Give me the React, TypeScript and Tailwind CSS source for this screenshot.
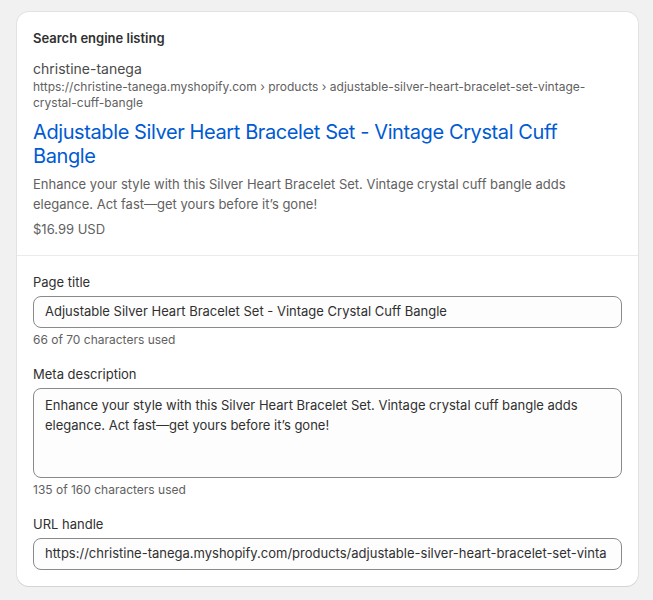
import React from "react";

export default function App() {
  const desc =
    "Enhance your style with this Silver Heart Bracelet Set. Vintage crystal cuff bangle adds elegance. Act fast\u2014get yours before it\u2019s gone!";
  return (
    <div
      className="min-h-[600px] w-full bg-[#f1f1f1] pt-[12px] px-[17px]"
      style={{ fontFamily: "Inter, 'Noto Sans', sans-serif" }}
    >
      <div className="w-[621px] rounded-[12px] bg-white shadow-[0_1px_0_0_rgba(26,26,26,0.07),0_0_0_1px_rgba(0,0,0,0.06)]">
        <div className="px-[16px] pt-[17px] pb-[16px] border-b border-[#ebebeb]">
          <h2 className="text-[13px] leading-[18px] font-semibold text-[#303030]">Search engine listing</h2>
          <div className="mt-[12px] text-[14px] leading-[20px] text-[#4a4a4a]">christine-tanega</div>
          <div className="text-[12px] leading-[16px] text-[#616161] break-words">
            https://christine-tanega.myshopify.com › products › adjustable-silver-heart-bracelet-set-vintage-crystal-cuff-bangle
          </div>
          <div className="mt-[9px] text-[20px] leading-[24px] tracking-[-0.4px] text-[#005bd3]">
            Adjustable Silver Heart Bracelet Set - Vintage Crystal Cuff Bangle
          </div>
          <div className="mt-[6px] text-[13px] leading-[20px] text-[#616161]">{desc}</div>
          <div className="mt-[5px] text-[13px] leading-[20px] text-[#616161]">$16.99 USD</div>
        </div>
        <div className="px-[16px] pt-[16px] pb-[16px] flex flex-col gap-[16px] text-[#303030]">
          <div>
            <label className="block text-[13px] leading-[20px] mb-[4px]">Page title</label>
            <div className="h-[32px] rounded-[8px] border border-[#8a8a8a] bg-[#fdfdfd] px-[11px] flex items-center text-[13px] whitespace-nowrap overflow-hidden">
              Adjustable Silver Heart Bracelet Set - Vintage Crystal Cuff Bangle
            </div>
            <div className="mt-[4px] text-[12px] leading-[16px] text-[#616161]">66 of 70 characters used</div>
          </div>
          <div>
            <label className="block text-[13px] leading-[20px] mb-[4px]">Meta description</label>
            <div className="h-[90px] rounded-[8px] border border-[#8a8a8a] bg-[#fdfdfd] px-[11px] py-[6px] text-[13px] leading-[20px]">
              {desc}
            </div>
            <div className="mt-[4px] text-[12px] leading-[16px] text-[#616161]">135 of 160 characters used</div>
          </div>
          <div>
            <label className="block text-[13px] leading-[20px] mb-[4px]">URL handle</label>
            <div className="h-[32px] rounded-[8px] border border-[#8a8a8a] bg-[#fdfdfd] px-[11px] flex items-center text-[13px]">
              <div className="flex-1 overflow-hidden whitespace-nowrap">
                https://christine-tanega.myshopify.com/products/adjustable-silver-heart-bracelet-set-vinta
              </div>
            </div>
          </div>
        </div>
      </div>
    </div>
  );
}
